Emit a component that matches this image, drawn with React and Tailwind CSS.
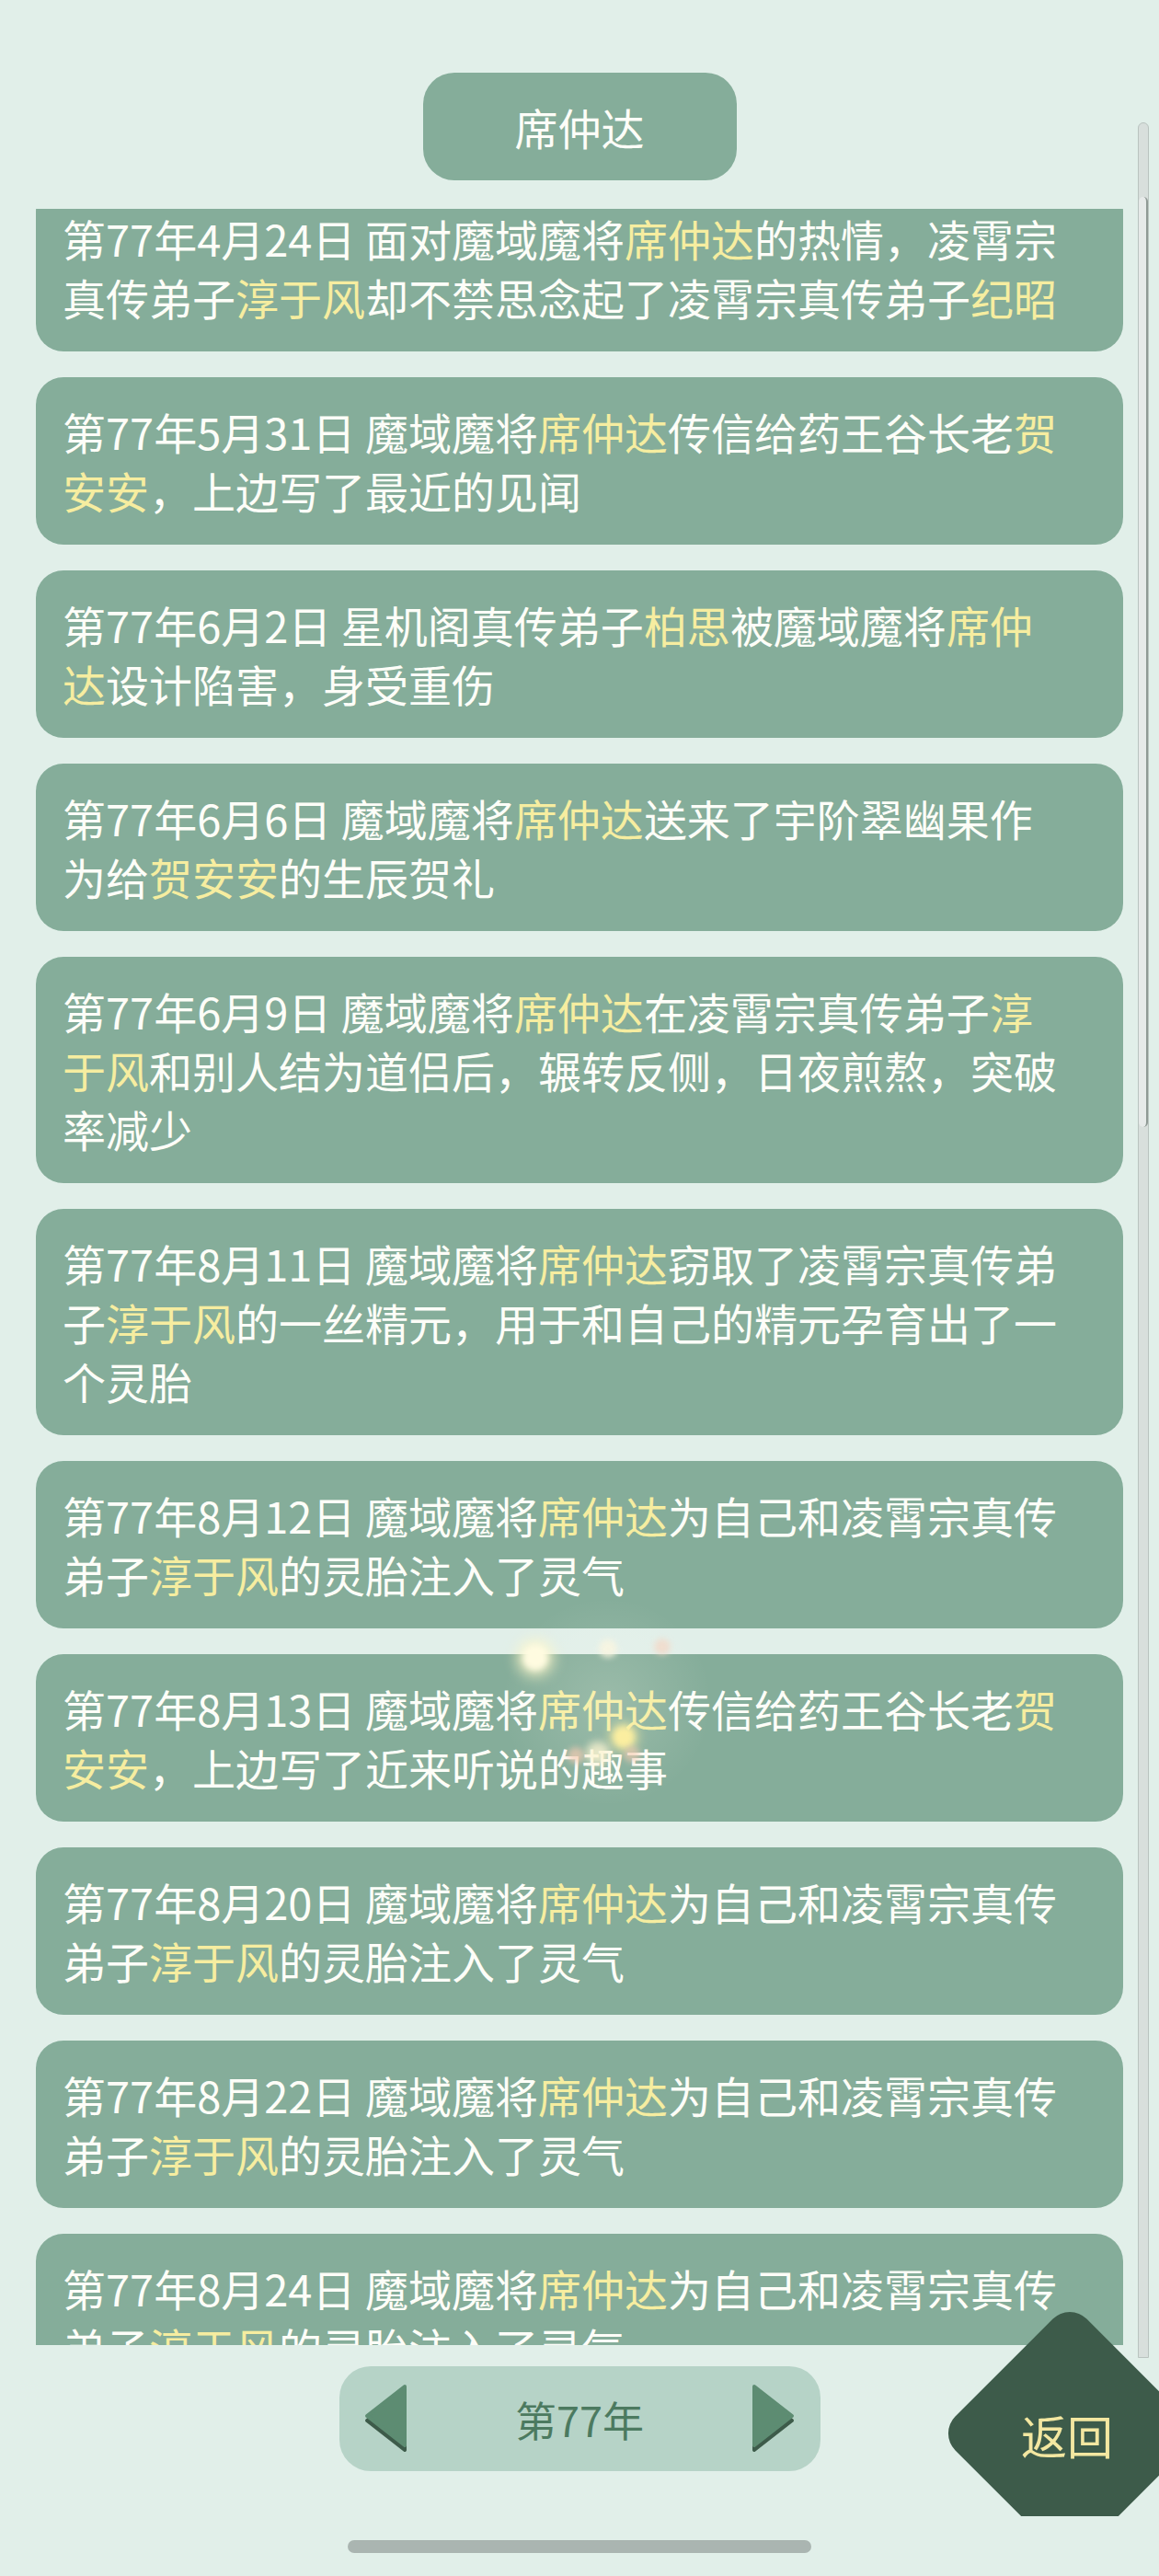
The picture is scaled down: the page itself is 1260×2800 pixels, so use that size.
import React from "react";

const cards = [
  ["第77年4月24日 面对魔域魔将{席仲达}的热情，凌霄宗", "真传弟子{淳于风}却不禁思念起了凌霄宗真传弟子{纪昭}"],
  ["第77年5月31日 魔域魔将{席仲达}传信给药王谷长老{贺}", "{安安}，上边写了最近的见闻"],
  ["第77年6月2日 星机阁真传弟子{柏思}被魔域魔将{席仲}", "{达}设计陷害，身受重伤"],
  ["第77年6月6日 魔域魔将{席仲达}送来了宇阶翠幽果作", "为给{贺安安}的生辰贺礼"],
  ["第77年6月9日 魔域魔将{席仲达}在凌霄宗真传弟子{淳}", "{于风}和别人结为道侣后，辗转反侧，日夜煎熬，突破", "率减少"],
  ["第77年8月11日 魔域魔将{席仲达}窃取了凌霄宗真传弟", "子{淳于风}的一丝精元，用于和自己的精元孕育出了一", "个灵胎"],
  ["第77年8月12日 魔域魔将{席仲达}为自己和凌霄宗真传", "弟子{淳于风}的灵胎注入了灵气"],
  ["第77年8月13日 魔域魔将{席仲达}传信给药王谷长老{贺}", "{安安}，上边写了近来听说的趣事"],
  ["第77年8月20日 魔域魔将{席仲达}为自己和凌霄宗真传", "弟子{淳于风}的灵胎注入了灵气"],
  ["第77年8月22日 魔域魔将{席仲达}为自己和凌霄宗真传", "弟子{淳于风}的灵胎注入了灵气"],
  ["第77年8月24日 魔域魔将{席仲达}为自己和凌霄宗真传", "弟子{淳于风}的灵胎注入了灵气"],
];

function Line({ text }) {
  const parts = text.split(/(\{[^}]*\})/).filter(Boolean);
  return (
    <div className="whitespace-pre h-[64px] leading-[64px]">
      {parts.map((p, i) =>
        p.startsWith("{") ? (
          <span key={i} className="text-[#f6eda0]">
            {p.slice(1, -1)}
          </span>
        ) : (
          <span key={i}>{p}</span>
        )
      )}
    </div>
  );
}

function Arrow({ dir }) {
  const main = dir === "left" ? "44,3 3,35 44,67" : "4,3 45,35 4,67";
  const shadow = dir === "left" ? "44,8 3,40 44,72" : "4,8 45,40 4,72";
  return (
    <svg width="48" height="76" viewBox="0 0 48 76" className="block">
      <polygon points={shadow} fill="#3d5b4a" stroke="#3d5b4a" strokeWidth="4" strokeLinejoin="round" />
      <polygon points={main} fill="#5d8c72" stroke="#5d8c72" strokeWidth="4" strokeLinejoin="round" />
    </svg>
  );
}

export default function App() {
  return (
    <div className="relative w-[1260px] h-[2800px] overflow-hidden bg-[#e1efe9] font-['Noto_Sans_CJK_SC','Noto_Sans',sans-serif] flex flex-col">
      {/* title */}
      <div className="self-center mt-[79px] w-[341px] h-[117px] rounded-[34px] bg-[#85ad9a] flex items-center justify-center text-[47px] text-[#fdfdf8] leading-none">
        席仲达
      </div>

      {/* list */}
      <div className="mt-[31px] ml-[39px] w-[1182px] h-[2322px] overflow-hidden">
        <div className="mt-[-27px] flex flex-col gap-[28px]">
          {cards.map((lines, i) => (
            <div
              key={i}
              className="rounded-[30px] bg-[#85ad9a] px-[29px] py-[27px] text-[47px] text-[#fdfdf8]"
            >
              {lines.map((l, j) => (
                <Line key={j} text={l} />
              ))}
            </div>
          ))}
        </div>
      </div>

      {/* year nav */}
      <div className="self-center mt-[23px] w-[523px] h-[114px] rounded-[34px] bg-[#b6d3c7] flex items-center justify-between px-[27px]">
        <Arrow dir="left" />
        <span className="text-[45px] text-[#4c7a60] leading-none">第77年</span>
        <Arrow dir="right" />
      </div>

      {/* home indicator */}
      <div className="self-center mt-[75px] w-[504px] h-[14px] rounded-full bg-[#aab5b1]" />

      {/* scrollbar */}
      <div className="absolute left-[1237px] top-[133px] w-[12px] h-[2430px] rounded-t-[6px] bg-[#d8dfdc] border border-[#b9c3bf]">
        <div className="mt-[80px] h-[1011px] rounded-[6px] bg-[#e6eae9] border-r-2 border-[#8f9a95]" />
      </div>

      {/* sparkles */}
      <div className="absolute left-[540px] top-[1740px] w-[240px] h-[220px] rounded-full bg-[radial-gradient(circle,rgba(255,255,240,0.18)_0%,rgba(255,255,240,0)_70%)]" />
      <div className="absolute left-[568px] top-[1788px] w-[28px] h-[28px] rounded-full bg-[#fffbe0] blur-[3px] shadow-[0_0_14px_6px_rgba(255,248,200,0.8)]" />
      <div className="absolute left-[651px] top-[1782px] w-[20px] h-[20px] rounded-full bg-[#fbf6e0] blur-[3px] opacity-80" />
      <div className="absolute left-[711px] top-[1781px] w-[18px] h-[18px] rounded-full bg-[#f6d6c4] blur-[3px] opacity-70" />
      <div className="absolute left-[666px] top-[1876px] w-[24px] h-[24px] rounded-full bg-[#fbeea0] blur-[3px] shadow-[0_0_10px_4px_rgba(255,240,160,0.6)]" />
      <div className="absolute left-[637px] top-[1893px] w-[26px] h-[26px] rounded-full bg-[#fbf3d0] blur-[4px] opacity-80" />
      <div className="absolute left-[617px] top-[1899px] w-[18px] h-[18px] rounded-full bg-[#f4cbb2] blur-[3px] opacity-70" />
      <div className="absolute left-[678px] top-[1898px] w-[18px] h-[18px] rounded-full bg-[#f2c8b0] blur-[3px] opacity-60" />

      {/* back button */}
      <div className="absolute left-[1020px] top-[2500px] w-[240px] h-[235px] overflow-hidden">
        <div className="absolute left-[42px] top-[44px] w-[202px] h-[202px] rotate-45 rounded-[26px] bg-[#3d5b4a]" />
        <div className="absolute left-[88px] top-[116px] w-[104px] h-[60px] flex items-center justify-center text-[50px] leading-none text-[#f3e7a1]">
          返回
        </div>
      </div>
    </div>
  );
}
